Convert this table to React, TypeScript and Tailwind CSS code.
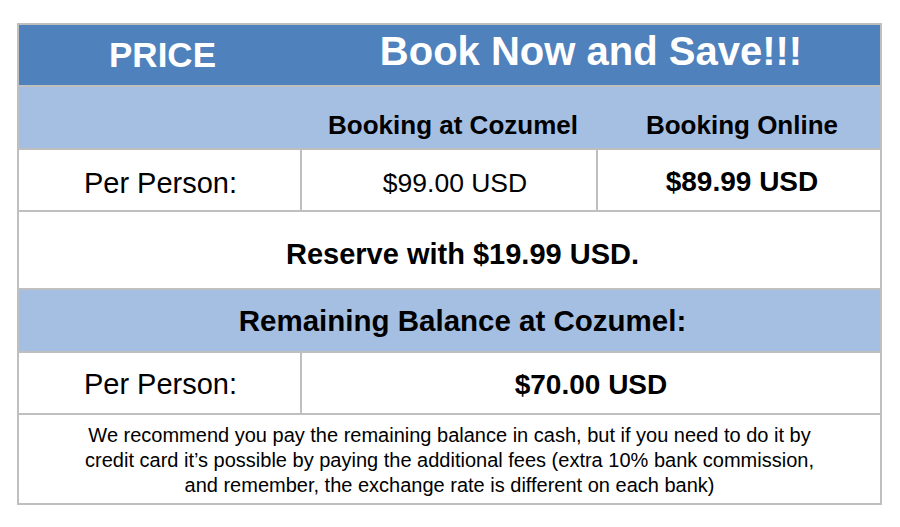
import React from "react";

const font = { fontFamily: '"Liberation Sans", Arial, sans-serif' };

const App = () => {
    return (
        <div className="w-[900px] h-[527px] bg-white pt-[23px] pl-[17px]" style={font}>
            <div className="w-[865px] border-2 border-[#bfbfbf] text-black">
                {/* header */}
                <div className="flex h-[62px] bg-[#4f81bd] border-b-2 border-[#bfbfbf] text-white font-bold">
                    <div className="w-[283px] flex items-center justify-center text-[35px] pt-[1px] pl-[4px]">PRICE</div>
                    <div className="flex-1 flex items-center justify-center text-[40px] pb-[8px]">Book Now and Save!!!</div>
                </div>
                {/* column titles */}
                <div className="flex h-[63px] bg-[#a5bfe3] border-b-2 border-[#bfbfbf] font-bold text-[26px]">
                    <div className="w-[283px]"></div>
                    <div className="w-[296px] flex items-center justify-center pt-[16px] pl-[6px]">Booking at Cozumel</div>
                    <div className="flex-1 flex items-center justify-center pt-[16px] pl-[6px]">Booking Online</div>
                </div>
                {/* per person */}
                <div className="flex h-[62px] border-b-2 border-[#bfbfbf]">
                    <div className="w-[283px] border-r-2 border-[#bfbfbf] flex items-center justify-center text-[29px] pt-[8px] pl-[2px]">Per Person:</div>
                    <div className="w-[296px] border-r-2 border-[#bfbfbf] flex items-center justify-center text-[26.5px] pl-[12px] pt-[7px]">$99.00 USD</div>
                    <div className="flex-1 flex items-center justify-center text-[28px] font-bold pl-[6px] pt-[3px]">$89.99 USD</div>
                </div>
                {/* reserve */}
                <div className="flex h-[78px] border-b-2 border-[#bfbfbf] items-center justify-center font-bold text-[29px] pt-[10px] pl-[26px]">
                    Reserve with $19.99 USD.
                </div>
                {/* remaining */}
                <div className="flex h-[63px] bg-[#a5bfe3] border-b-2 border-[#bfbfbf] items-center justify-center font-bold text-[29.5px] pt-[2px] pl-[26px]">
                    Remaining Balance at Cozumel:
                </div>
                {/* per person 2 */}
                <div className="flex h-[62px] border-b-2 border-[#bfbfbf]">
                    <div className="w-[283px] border-r-2 border-[#bfbfbf] flex items-center justify-center text-[29px] pl-[2px] pt-[4px]">Per Person:</div>
                    <div className="flex-1 flex items-center justify-center text-[28px] font-bold pt-[4px]">$70.00 USD</div>
                </div>
                {/* note */}
                <div className="h-[88px] flex items-center justify-center text-center text-[20px] leading-[25px] pt-[2px]">
                    We recommend you pay the remaining balance in cash, but if you need to do it by<br />
                    credit card it’s possible by paying the additional fees (extra 10% bank commission,<br />
                    and remember, the exchange rate is different on each bank)
                </div>
            </div>
        </div>
    );
};

export default App;
